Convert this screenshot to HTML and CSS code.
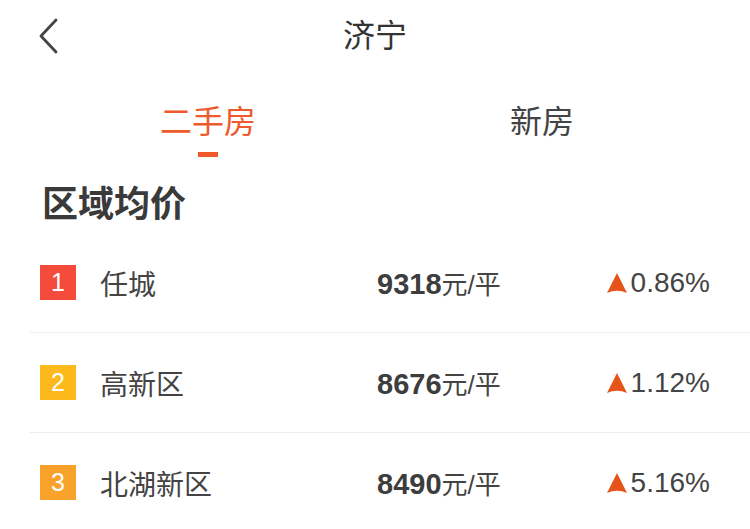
FILE: index.html
```html
<!DOCTYPE html>
<html lang="zh-CN">
  <head>
    <meta charset="UTF-8" />
    <title>济宁</title>
    <link rel="stylesheet" href="styles.css">
  </head>
  <body>
    <div class="header">
      <div class="back">
        <svg width="20" height="36" viewBox="0 0 20 36">
          <path d="M18 2 L3 18 L18 34" fill="none" stroke="#444" stroke-width="2.8" stroke-linecap="round" stroke-linejoin="round" />
        </svg>
      </div>
      <div class="title">济宁</div>
      <div class="side"></div>
    </div>

    <div class="tabs">
      <div class="tab active">
        <span class="tab-text">二手房</span>
        <span class="line"></span>
      </div>
      <div class="tab">
        <span class="tab-text">新房</span>
        <span class="line"></span>
      </div>
    </div>

    <div class="heading">区域均价</div>

    <div class="list">
      <div class="row">
        <span class="rank rank1">1</span>
        <span class="name">任城</span>
        <span class="price"><b>9318</b>元/平</span>
        <span class="change">
          <svg class="arrow" width="20" height="20" viewBox="0 0 20 20"><path d="M10 0 L20 20 Q10 15.5 0 20 Z" /></svg>0.86%
        </span>
      </div>
      <div class="row">
        <span class="rank rank2">2</span>
        <span class="name">高新区</span>
        <span class="price"><b>8676</b>元/平</span>
        <span class="change">
          <svg class="arrow" width="20" height="20" viewBox="0 0 20 20"><path d="M10 0 L20 20 Q10 15.5 0 20 Z" /></svg>1.12%
        </span>
      </div>
      <div class="row">
        <span class="rank rank3">3</span>
        <span class="name">北湖新区</span>
        <span class="price"><b>8490</b>元/平</span>
        <span class="change">
          <svg class="arrow" width="20" height="20" viewBox="0 0 20 20"><path d="M10 0 L20 20 Q10 15.5 0 20 Z" /></svg>5.16%
        </span>
      </div>
    </div>
  </body>
</html>
```

FILE: styles.css
```css
body {
  margin: 0;
  background: #fff;
  color: #444;
  font-family: "Liberation Sans", "Noto Sans CJK SC", sans-serif;
  overflow: hidden;
}
.header {
  display: flex;
  align-items: center;
  height: 72px;
}
.back,
.side {
  width: 120px;
}
.back {
  display: flex;
  padding-left: 38px;
  box-sizing: border-box;
}
.title {
  flex: 1;
  text-align: center;
  font-size: 32px;
  line-height: 72px;
  color: #333;
}
.tabs {
  display: flex;
  padding: 0 41px;
  height: 100px;
}
.tab {
  flex: 1;
  display: flex;
  flex-direction: column;
  align-items: center;
  padding-top: 34px;
}
.tab-text {
  font-size: 32px;
  line-height: 32px;
  color: #444;
}
.line {
  width: 20px;
  height: 5px;
  margin-top: 14px;
}
.tab.active .tab-text {
  color: #ee5a2c;
}
.tab.active .line {
  background: #ee5a2c;
}
.heading {
  padding: 15px 0 0 42px;
  height: 46px;
  font-size: 36px;
  line-height: 36px;
  font-weight: bold;
  color: #3a3a3a;
}
.row {
  display: grid;
  grid-template-columns: 60px 277px 1fr auto;
  align-items: center;
  height: 99px;
  margin-left: 30px;
  padding: 0 40px 0 10px;
  border-bottom: 1px solid #ececec;
}
.row:last-child {
  border-bottom: none;
}
.rank {
  width: 36px;
  height: 35px;
  color: #fff;
  font-size: 25px;
  line-height: 35px;
  text-align: center;
}
.rank1 {
  background: #f44b3a;
}
.rank2 {
  background: #fdb91c;
}
.rank3 {
  background: #f9a22b;
}
.name {
  font-size: 28px;
  color: #444;
}
.price {
  font-size: 26px;
  color: #444;
}
.price b {
  font-size: 29px;
  color: #3d3d3d;
}
.change {
  display: flex;
  align-items: center;
  font-size: 28px;
  color: #444;
}
.arrow {
  fill: #e6541a;
  margin-right: 4px;
}
```
